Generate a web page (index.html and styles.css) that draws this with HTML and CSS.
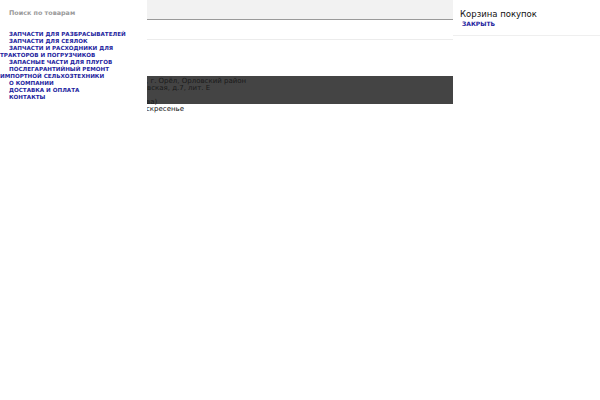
FILE: index.html
```html
<!DOCTYPE html>
<html lang="ru">
<head>
<meta charset="utf-8">
<title>Запчасти</title>
<link rel="stylesheet" href="styles.css">
</head>
<body>
<div class="page">
  <aside class="sidebar">
    <div class="search-label">Поиск по товарам</div>
    <ul class="menu">
      <li><a href="#">Запчасти для разбрасывателей</a></li>
      <li><a href="#">Запчасти для сеялок</a></li>
      <li><a href="#">Запчасти и расходники для тракторов и погрузчиков</a></li>
      <li><a href="#">Запасные части для плугов</a></li>
      <li><a href="#">Послегарантийный ремонт импортной сельхозтехники</a></li>
      <li><a href="#">О компании</a></li>
      <li><a href="#">Доставка и оплата</a></li>
      <li><a href="#">Контакты</a></li>
    </ul>
  </aside>
  <main class="center">
    <div class="search-box"></div>
    <div class="divider"></div>
    <div class="address">
      <div class="address-inner">
        <div class="l1">, г. Орёл, Орловский район</div>
        <div class="l2">вская, д.7, лит. Е</div>
        <div class="l3">&nbsp;</div>
        <div class="l4">ва)</div>
        <div class="l5">скресенье</div>
      </div>
    </div>
  </main>
  <aside class="cart">
    <div class="cart-title">Корзина покупок</div>
    <a class="cart-close" href="#">Закрыть</a>
  </aside>
</div>
</body>
</html>
```

FILE: styles.css
```css
html, body {
  margin: 0;
  padding: 0;
  background: #fff;
}
body {
  font-family: "DejaVu Sans", sans-serif;
  color: #111;
}
.page {
  display: grid;
  grid-template-columns: 147px 306px 147px;
  width: 600px;
  height: 400px;
}
.sidebar {
  padding-top: 9px;
  background: #fff;
  position: relative;
  z-index: 2;
}
.search-label {
  padding-left: 9px;
  font-size: 6.4px;
  font-weight: bold;
  color: #9a9a9a;
  line-height: 8px;
}
.menu {
  list-style: none;
  margin: 14px 0 0 0;
  padding: 0;
  width: 146px;
}
.menu li {
  text-indent: 9px;
  font-size: 5.6px;
  line-height: 7px;
  font-weight: bold;
  text-transform: uppercase;
}
.menu a {
  color: #1e1e9e;
  text-decoration: none;
}
.center {
  display: flex;
  flex-direction: column;
}
.search-box {
  height: 19px;
  background: #f2f2f2;
  border-bottom: 1px solid #9a9a9a;
}
.divider {
  margin-top: 19px;
  height: 1px;
  background: #ececec;
}
.address {
  margin-top: 36px;
  height: 28px;
  background: #444;
}
.address-inner {
  font-size: 7px;
  line-height: 7px;
  color: #1a1a1a;
  padding-top: 2px;
  overflow: hidden;
}
.address-inner .l1 {
  margin-left: -1px;
}
.address-inner .l4 {
  margin-left: -1px;
}
.address-inner .l5 {
  color: #111;
  margin-left: -1px;
}
.cart {
  padding: 9px 0 0 7px;
  border-bottom: 1px solid #efefef;
  height: 26px;
}
.cart-title {
  font-size: 8.5px;
  line-height: 11px;
  color: #111;
}
.cart-close {
  display: block;
  padding-left: 2px;
  font-size: 6px;
  line-height: 7px;
  font-weight: bold;
  text-transform: uppercase;
  color: #1e1e9e;
  text-decoration: none;
}
```
